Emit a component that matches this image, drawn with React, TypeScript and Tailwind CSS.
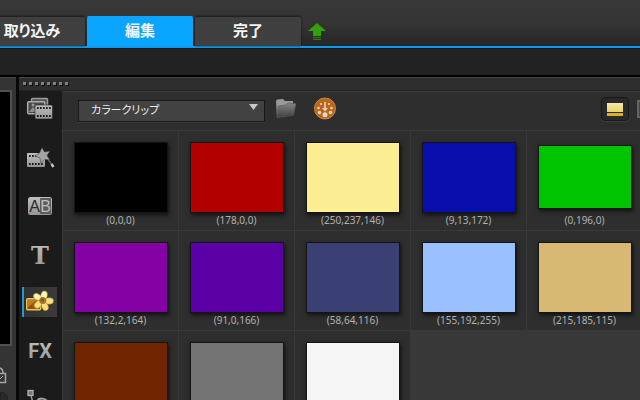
import React, { useState } from "react";

type Swatch = { label?: string; name?: string; color: string; short?: boolean };

const swatches: Swatch[] = [
  { label: "(0,0,0)", color: "rgb(0,0,0)" },
  { label: "(178,0,0)", color: "rgb(178,0,0)" },
  { label: "(250,237,146)", color: "rgb(250,237,146)" },
  { label: "(9,13,172)", color: "rgb(9,13,172)" },
  { label: "(0,196,0)", color: "rgb(0,196,0)", short: true },
  { label: "(132,2,164)", color: "rgb(132,2,164)" },
  { label: "(91,0,166)", color: "rgb(91,0,166)" },
  { label: "(58,64,116)", color: "rgb(58,64,116)" },
  { label: "(155,192,255)", color: "rgb(155,192,255)" },
  { label: "(215,185,115)", color: "rgb(215,185,115)" },
  { name: "茶", color: "rgb(112,36,0)" },
  { name: "灰", color: "rgb(116,116,116)" },
  { name: "白", color: "rgb(245,245,245)" },
];

const tabs = ["取り込み", "編集", "完了"];

function FilmHoles({ x, y, n }: { x: number; y: number; n: number }) {
  return (
    <>
      {Array.from({ length: n }, (_, i) => (
        <g key={i} fill="#1c1c1c">
          <rect x={x + i * 3} y={y} width="1.700" height="2" />
          <rect x={x + i * 3} y={y + 8} width="1.700" height="2" />
        </g>
      ))}
    </>
  );
}

const Icon = ({ children }: { children: React.ReactNode }) => (
  <svg width="36" height="30" viewBox="0 0 36 30" aria-hidden="true" className="shrink-0">
    <defs>
      <linearGradient id="metal" x1="0" y1="0" x2="0" y2="1">
        <stop offset="0" stopColor="#c0c0c0" />
        <stop offset="1" stopColor="#949494" />
      </linearGradient>
    </defs>
    {children}
  </svg>
);

const tools = [
  {
    name: "メディア",
    icon: (
      <Icon>
        <rect x="9.500" y="3.500" width="16" height="9" rx="1" fill="#555" stroke="#999" strokeWidth="1.500" />
        <rect x="5.700" y="6.700" width="17" height="12" rx="1" fill="#4a4a4a" stroke="#adadad" strokeWidth="1.500" />
        <path d="M7 17l4-5 3 3 2-2v4z" fill="#909090" />
        <circle cx="11" cy="10" r="1.500" fill="#999" />
        <rect x="13" y="10" width="17.500" height="14" rx="1.500" fill="url(#metal)" stroke="#222" strokeWidth=".6" />
        <FilmHoles x={15} y={12} n={5} />
      </Icon>
    ),
  },
  {
    name: "インスタントプロジェクト",
    icon: (
      <Icon>
        <rect x="5" y="10" width="18" height="14" rx="1" fill="url(#metal)" />
        <FilmHoles x={7} y={12} n={5} />
        <path d="M25 15l6.500 9" stroke="#111" strokeWidth="4" />
        <path d="M25 15l6 8" stroke="#666" strokeWidth="1.500" />
        <path d="M29.500 21l2 3" stroke="#c4c4c4" strokeWidth="2.500" />
        <path d="M20 4.500l2.500 4.500 5.500-1-3 4.500 3 4.500-5.500-.5-3.500 4-1-5.500-5.500-2 5-3z" fill="#a3a3a3" stroke="#333" strokeWidth=".5" />
      </Icon>
    ),
  },
  {
    name: "トランジション",
    icon: (
      <Icon>
        <rect x="6" y="6" width="24" height="18" rx="2.500" fill="url(#metal)" />
        <rect x="18" y="7" width="11" height="16" rx="1" fill="#5c5c5c" />
        <text x="12.500" y="21" textAnchor="middle" fontFamily="Liberation Sans" className="fill-[#2b2b2b] text-[16px]">A</text>
        <text x="23.500" y="21" textAnchor="middle" fontFamily="Liberation Sans" className="fill-[#bcbcbc] text-[16px]">B</text>
      </Icon>
    ),
  },
  {
    name: "タイトル",
    icon: (
      <Icon>
        <text x="18" y="25" textAnchor="middle" fill="url(#metal)" fontFamily="DejaVu Serif" className="text-[24px] font-bold">T</text>
      </Icon>
    ),
  },
  {
    name: "グラフィック",
    icon: (
      <Icon>
        <rect x="4.700" y="11.700" width="14" height="11" rx="1" fill="#9a5208" stroke="#e5c35c" strokeWidth="1.400" />
        <path d="M6 13h9l-9 7z" fill="#bd7b22" />
        <g fill="#f7df7a" stroke="#b8872a" strokeWidth=".5">
          <ellipse cx="22" cy="8.500" rx="3.200" ry="4.500" transform="rotate(12 22 8.500)" fill="#fff6bd" />
          <ellipse cx="15.500" cy="10" rx="3" ry="4.500" transform="rotate(-55 15.500 10)" fill="#fdf0a8" />
          <ellipse cx="27" cy="14" rx="4.500" ry="3.200" />
          <ellipse cx="16" cy="17.500" rx="3.200" ry="4.200" transform="rotate(45 16 17.500)" />
          <ellipse cx="23" cy="19.500" rx="3.200" ry="4.200" transform="rotate(-20 23 19.500)" />
        </g>
        <circle cx="20.800" cy="13.500" r="3.500" fill="#a8782b" />
        <circle cx="20.300" cy="13" r="1.800" fill="#7f5a24" />
      </Icon>
    ),
  },
  {
    name: "フィルター",
    icon: (
      <Icon>
        <text x="18" y="23" textAnchor="middle" fill="url(#metal)" fontFamily="Liberation Sans Narrow, Roboto, sans-serif" className="text-[20px] font-bold">FX</text>
      </Icon>
    ),
  },
  {
    name: "パス",
    icon: (
      <Icon>
        <path d="M9 12c1 7 5 12 12 12" fill="none" stroke="#999" strokeWidth="1.500" />
        <rect x="6" y="7.500" width="5" height="5" fill="#777" stroke="#b0b0b0" strokeWidth="1.300" />
        <path d="M14 20c2-6 11-6 12 1" fill="none" stroke="#a0a0a0" strokeWidth="2" />
      </Icon>
    ),
  },
];

export default function App() {
  const [tab, setTab] = useState(1);
  const [tool, setTool] = useState(4);
  return (
    <div className="flex h-screen flex-col overflow-hidden bg-[#222] font-['Noto_Sans','Noto_Sans_CJK_JP',sans-serif]">
      <header className="flex h-12 shrink-0 items-end border-b-2 border-[#0a9cf5] bg-linear-to-b from-[#373737] via-[#343434] to-[#262626]">
        <nav className="-ml-[21px] flex gap-[2px]">
          {tabs.map((t, i) => (
            <button
              key={t}
              onClick={() => setTab(i)}
              className={
                "h-[30px] w-[106px] rounded-t-xs border-t pb-1 font-['Noto_Sans_CJK_JP',sans-serif] text-[15px] leading-none font-bold text-[#f4f4f4] [font-feature-settings:'palt'] " +
                (tab === i ? "border-[#0aa5ff] bg-[#0aa5ff]" : "border-[#222] bg-[#3f3f3f] shadow-[0_0_2px_#111]")
              }
            >
              {t}
            </button>
          ))}
        </nav>
        <button aria-label="アップロード" className="mb-1 ml-[7px]">
          <svg width="18" height="19" viewBox="0 0 18 19" aria-hidden="true">
            <path d="M9 0l9 8h-5v5H5V8H0z" fill="#35a00c" />
            <path d="M5 14h8v1H5zM5 16h8v1H5z" fill="#2c8010" />
          </svg>
        </button>
      </header>

      <div className="h-[27px] shrink-0 border-t border-[#151515]" />

      <div className="flex min-h-0 flex-1 border-t-2 border-black">
        <aside className="flex w-4 shrink-0 flex-col border-t border-[#484848] bg-[#343434]">
          <div className="mt-3 h-64 w-3 shrink-0 border-y-2 border-r-2 border-[#505050] bg-black" />
          <div className="flex flex-col gap-2 pt-5">
            <svg width="7" height="18" viewBox="0 0 7 18" aria-hidden="true">
              <path d="M0 2q3 1 3 5M0 7.500h5.500v9H0" fill="none" stroke="#a5a5a5" strokeWidth="1.500" />
              <path d="M0 13l3-3" stroke="#aaa" />
            </svg>
            <div className="h-8 w-2 rounded-tr-md border border-[#222] bg-[#2a2a2a]" />
          </div>
        </aside>

        <main className="ml-[3px] flex min-w-0 flex-1 flex-col border-t border-[#484848] bg-[#2e2e2e] shadow-[-3px_0_0_#080808]">
          <div className="flex h-[13px] shrink-0 gap-[3px] border-b border-[#222] pt-1 pl-1">
            {Array.from({ length: 8 }, (_, i) => (
              <span key={i} className="size-[3px] bg-[#808080] shadow-[1px_1px_0_#111]" />
            ))}
          </div>
          <div className="flex min-h-0 flex-1">
            <nav className="flex w-[43px] shrink-0 flex-col gap-[18px] overflow-hidden bg-[#1b1b1b] pt-1 pl-[3px]">
              {tools.map((t, i) => (
                <button
                  key={t.name}
                  aria-label={t.name}
                  onClick={() => setTool(i)}
                  className={
                    "flex h-[30px] w-[35px] shrink-0 overflow-hidden " +
                    (tool === i ? "bg-linear-to-r from-[#303030] to-[#3b3b3b] shadow-[inset_2px_0_0_#2795d8]" : "")
                  }
                >
                  {t.icon}
                </button>
              ))}
            </nav>

            <section className="flex min-w-0 flex-1 flex-col overflow-hidden border-t border-[#3c3c3c]">
              <div className="flex h-[38px] shrink-0 items-center pb-1 pl-4">
                <div className="relative">
                  <select
                    aria-label="ライブラリ"
                    className="h-[22px] w-[187px] appearance-none border border-[#191919] bg-[#424242] pb-[3px] pl-3 font-['Noto_Sans_CJK_JP',sans-serif] text-[11px] leading-none text-[#eee] shadow-[0_1px_0_#3c3c3c] [font-feature-settings:'palt']"
                  >
                    <option>カラークリップ</option>
                  </select>
                  <svg width="9" height="6" viewBox="0 0 9 6" aria-hidden="true" className="pointer-events-none absolute top-2 right-[7px]">
                    <path d="M0 0h9L4.500 6z" fill="#c8c8c8" />
                  </svg>
                </div>
                <button aria-label="フォルダー" className="ml-[10px]">
                  <svg width="23" height="22" viewBox="0 0 23 22" aria-hidden="true">
                    <defs>
                      <linearGradient id="folder" x1="0" y1="0" x2="0" y2="1">
                        <stop offset="0" stopColor="#858585" />
                        <stop offset="1" stopColor="#3f3f3f" />
                      </linearGradient>
                    </defs>
                    <path d="M1 3l1-1.500 6-.5 2 2h8v14L2 19.500z" fill="#999" />
                    <path d="M3 8l8-1 2-2 8 .5-2.500 12L2 19.500z" fill="url(#folder)" stroke="#555" strokeWidth=".6" />
                  </svg>
                </button>
                <button aria-label="コンテンツ" className="ml-[15px]">
                  <svg width="24" height="24" viewBox="0 0 24 24" aria-hidden="true">
                    <circle cx="12" cy="11.500" r="10.500" fill="#b9671a" stroke="#d58b3f" strokeWidth="1" />
                    <g fill="#e8d4bc">
                      <path d="M11.200 5h1.600v6H15l-3 3.500L9 11h2.200z" />
                      <circle cx="12" cy="17.800" r="2.500" />
                      <circle cx="6.500" cy="15.500" r="1.800" />
                      <circle cx="17.500" cy="15.500" r="1.800" />
                      <circle cx="5.500" cy="11" r="1.300" />
                      <circle cx="18.500" cy="11" r="1.300" />
                      <circle cx="8" cy="7" r="1.100" />
                      <circle cx="16" cy="7" r="1.100" />
                    </g>
                  </svg>
                </button>
                <div className="ml-auto flex h-6 items-center gap-2">
                  <button aria-label="サムネイル表示" className="flex h-6 w-7 flex-col items-center justify-center gap-px rounded-sm border border-[#191919] bg-[#292929] shadow-[0_1px_0_#3c3c3c]">
                    <span className="h-[9px] w-4 bg-linear-to-b from-[#f5e9aa] to-[#e8d16b]" />
                    <span className="h-[3px] w-4 bg-[#d9ae29]" />
                  </button>
                  <button aria-label="リスト表示" className="h-[18px] w-[3px] border-y-2 border-l-2 border-[#666] bg-[#444]" />
                </div>
              </div>

              <ul className="grid flex-1 grid-cols-[repeat(5,116px)] content-start bg-[#383838]">
                {swatches.map((s) => (
                  <li key={s.color} className="h-[100px] border-t border-l border-[#393939] bg-[#2e2e2e]">
                    <button aria-label={s.name} className="flex w-full flex-col items-center pt-[11px]">
                      <span className="flex h-[70px] items-center">
                        <span
                          className={
                            "w-[94px] border border-[#141414] shadow-[1px_2px_4px_#111] " + (s.short ? "h-[64px]" : "h-[71px]")
                          }
                          style={{ backgroundColor: s.color }}
                        />
                      </span>
                      {s.label && <span className="text-[10px] leading-4 text-[#b0b0b0]">{s.label}</span>}
                    </button>
                  </li>
                ))}
              </ul>
            </section>
          </div>
        </main>
      </div>
    </div>
  );
}
